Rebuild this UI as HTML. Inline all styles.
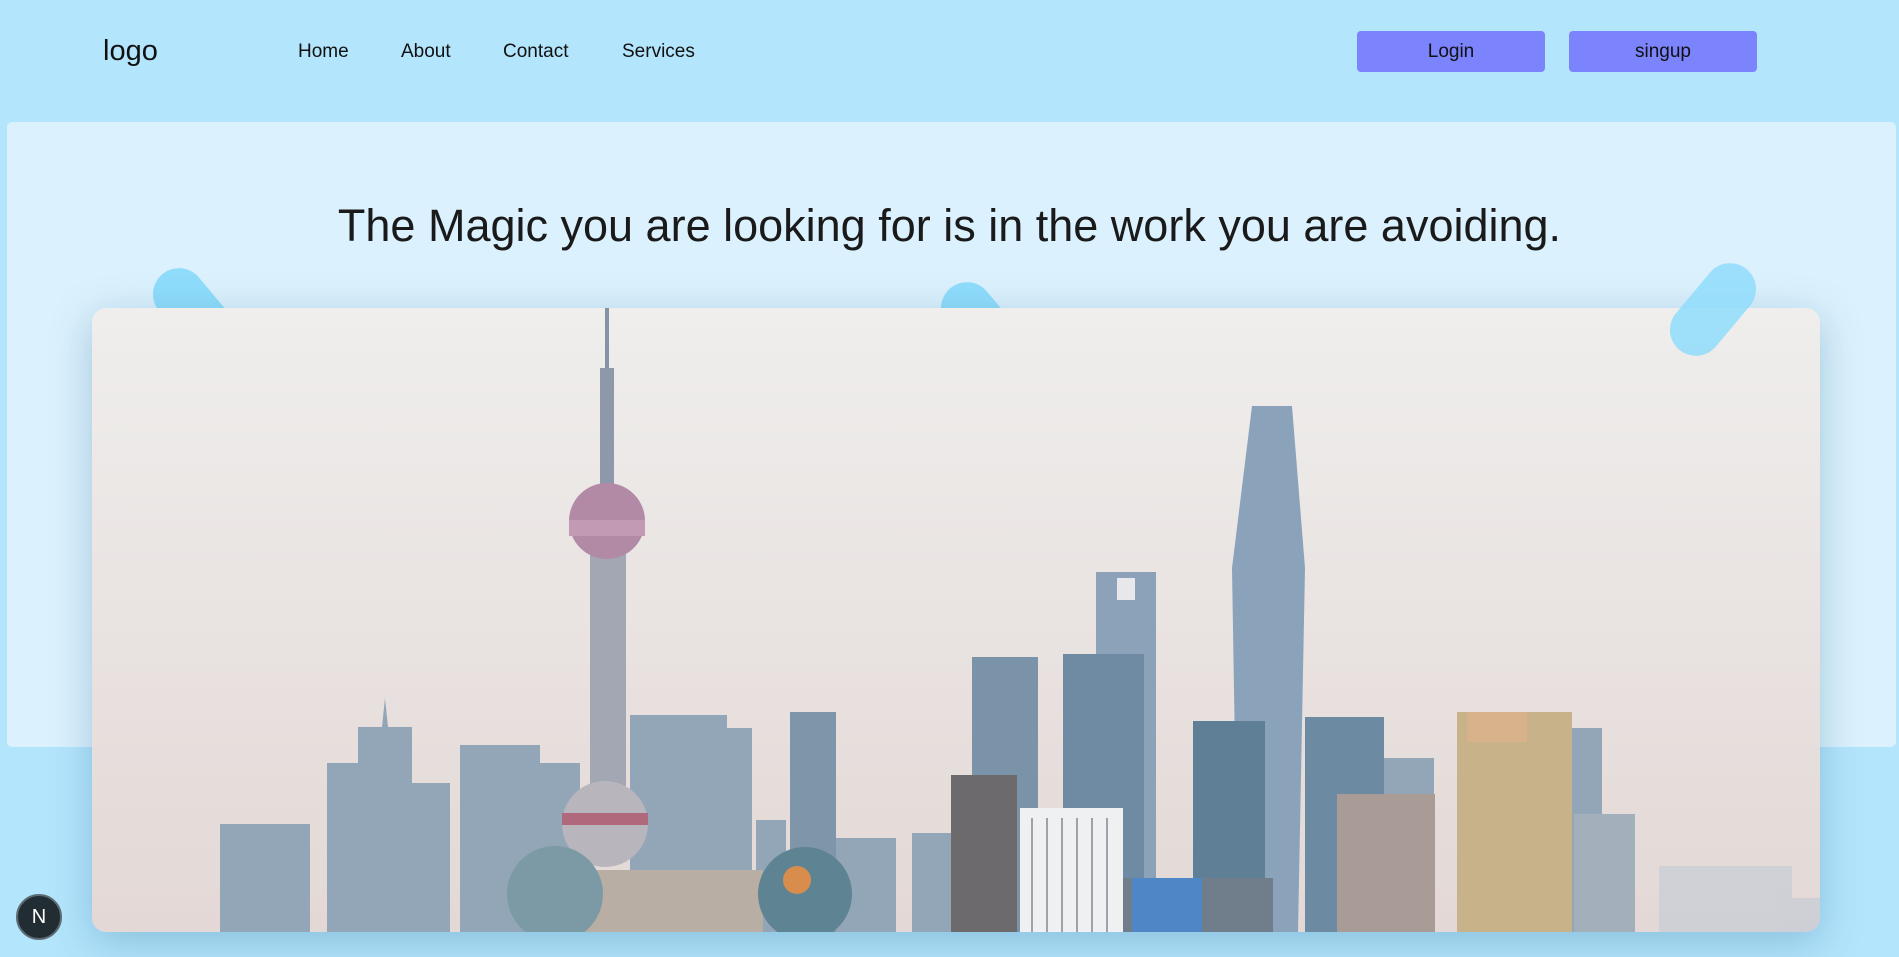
<!DOCTYPE html>
<html><head><meta charset="utf-8"><style>
*{margin:0;padding:0;box-sizing:border-box}
body{width:1899px;height:957px;overflow:hidden;background:#b3e5fc;font-family:"Liberation Sans",Arial,sans-serif;position:relative;color:#111}
.logo{position:absolute;left:103px;top:35px;font-size:29px}
.nav a{position:absolute;top:41px;font-size:19px;color:#111;text-decoration:none}
.btn{position:absolute;top:31px;width:188px;height:41px;background:#7b83fd;border-radius:4px;font-size:19px;text-align:center;line-height:41px}
.panel{position:absolute;left:7px;top:122px;width:1889px;height:625px;background:#dbf1fd;border-radius:5px}
h1{position:absolute;left:0;width:1899px;top:200px;text-align:center;font-weight:normal;font-size:45px;color:#1a1a1a}
.pill{position:absolute;width:52px;height:105px;border-radius:26px;background:#8fdcfb;transform:rotate(40deg)}
.card{position:absolute;left:92px;top:308px;width:1728px;height:624px;border-radius:14px;overflow:hidden;box-shadow:0 10px 40px rgba(60,120,160,.35)}
.nb{position:absolute;left:16px;top:894px;width:46px;height:46px;border-radius:50%;background:#222c33;border:2px solid #5b6b73;color:#fff;font-size:20px;text-align:center;line-height:42px}
</style></head><body>
<div class="logo">logo</div>
<div class="nav"><a style="left:298px">Home</a><a style="left:401px">About</a><a style="left:503px">Contact</a><a style="left:622px">Services</a></div>
<div class="btn" style="left:1357px">Login</div>
<div class="btn" style="left:1569px">singup</div>
<div class="panel"></div>
<h1>The Magic you are looking for is in the work you are avoiding.</h1>
<div class="pill" style="left:170px;top:262px;transform:rotate(-40deg)"></div>
<div class="pill" style="left:958px;top:276px;transform:rotate(-40deg)"></div>
<div class="card">
<svg width="1728" height="624" viewBox="0 0 1728 624">
<defs><linearGradient id="sky" x1="0" y1="0" x2="0" y2="1"><stop offset="0" stop-color="#efeeed"/><stop offset="1" stop-color="#e3d8d5"/></linearGradient></defs>
<rect width="1728" height="624" fill="url(#sky)"/>
<g fill="#c9ced6" opacity=".8"><rect x="1567" y="558" width="133" height="66"/><rect x="1700" y="590" width="28" height="34"/></g>
<g fill="#93a6b8">
<rect x="128" y="516" width="90" height="108"/><rect x="235" y="455" width="35" height="169"/><rect x="266" y="419" width="54" height="205"/><polygon points="290,419 293,390 296,419"/>
<rect x="318" y="475" width="40" height="149"/><rect x="368" y="437" width="80" height="187"/><rect x="448" y="455" width="40" height="169"/>
<rect x="538" y="407" width="97" height="217"/><rect x="600" y="420" width="60" height="204"/><rect x="664" y="512" width="30" height="112"/>
<rect x="698" y="404" width="46" height="220" fill="#7f96aa"/><rect x="744" y="530" width="60" height="94"/><rect x="820" y="525" width="40" height="99"/>
<rect x="880" y="349" width="66" height="275" fill="#7a93a9"/>
<polygon points="1004,264 1064,264 1064,624 1004,624" fill="#8ba2b8"/>
<polygon points="971,346 1052,346 1052,624 971,624" fill="#6f8ba3"/>
<polygon points="1160,98 1200,98 1213,260 1206,624 1146,624 1140,260" fill="#8aa3bb"/>
<rect x="1101" y="413" width="72" height="211" fill="#5f7f97"/>
<rect x="1213" y="409" width="79" height="215" fill="#6c8aa1"/>
<rect x="1292" y="450" width="50" height="174"/>
<rect x="1480" y="420" width="30" height="204"/><rect x="1482" y="506" width="61" height="118" fill="#a3b0bb"/>
</g>
<rect x="1025" y="270" width="18" height="22" fill="#e8e8ea"/>
<rect x="1245" y="486" width="98" height="138" fill="#a99b96"/>
<rect x="1365" y="404" width="115" height="220" fill="#c8b28a"/>
<rect x="1375" y="404" width="60" height="30" fill="#d8b28a"/>
<rect x="859" y="467" width="66" height="157" fill="#6d6a6e"/>
<rect x="928" y="500" width="103" height="124" fill="#eef0f2"/>
<g stroke="#556" stroke-width="2" opacity=".5"><line x1="940" y1="510" x2="940" y2="624"/><line x1="955" y1="510" x2="955" y2="624"/><line x1="970" y1="510" x2="970" y2="624"/><line x1="985" y1="510" x2="985" y2="624"/><line x1="1000" y1="510" x2="1000" y2="624"/><line x1="1015" y1="510" x2="1015" y2="624"/></g>
<rect x="1031" y="570" width="150" height="54" fill="#6f7e8a"/><rect x="1040" y="570" width="70" height="54" fill="#4f86c6"/>
<rect x="513" y="0" width="4" height="60" fill="#8493a5"/>
<rect x="508" y="60" width="14" height="120" fill="#8d99ab"/>
<rect x="498" y="238" width="36" height="240" fill="#a3a6b3"/>
<circle cx="515" cy="213" r="38" fill="#b28aa6"/><rect x="477" y="212" width="76" height="16" fill="#c39ab4"/>
<circle cx="513" cy="516" r="43" fill="#b8b5bc"/><rect x="470" y="505" width="86" height="12" fill="#b0687c"/>
<rect x="465" y="562" width="206" height="62" fill="#b9aea3"/>
<circle cx="463" cy="586" r="48" fill="#7c9aa5"/><circle cx="713" cy="586" r="47" fill="#5e8393"/>
<circle cx="705" cy="572" r="14" fill="#d98d4d"/>
</svg>
</div>
<div class="pill" style="left:1687px;top:257px;opacity:.85"></div>
<div class="nb">N</div>
</body></html>
